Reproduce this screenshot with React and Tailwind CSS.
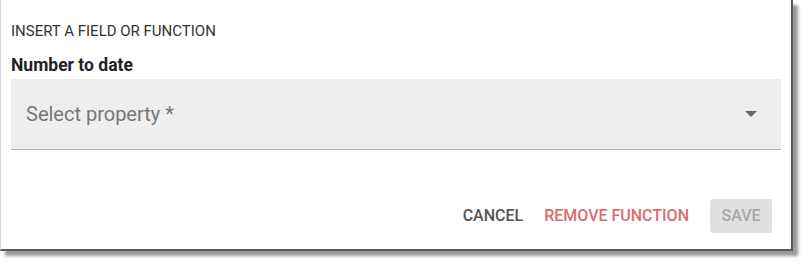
export default function App() {
  return (
    <div className="w-[808px] h-[267px] bg-white font-['Roboto',sans-serif]">
      <div className="w-[793px] h-[251px] bg-white border-l border-l-[#d8d8d8] border-r-2 border-b-2 border-r-[#5a5a5a] border-b-[#5a5a5a] shadow-[5px_5px_3px_rgba(0,0,0,0.4)] flex flex-col">
        <div className="pl-[10px] pr-[10px] pt-[21px]">
          <p className="text-[15px] leading-[20px] text-[#333] uppercase">
            Insert a field or function
          </p>
          <p className="mt-[14px] text-[17.5px] leading-[20px] font-bold text-[#222]">
            Number to date
          </p>
          <div className="mt-[4px] h-[71px] bg-[#eeeeee] border-b border-[#b5b5b5] flex items-center justify-between pl-[15px] pr-[24px]">
            <span className="text-[20px] text-[#777]">Select property *</span>
            <svg width="12" height="6" viewBox="0 0 12 6">
              <path d="M0 0 L12 0 L6 6 Z" fill="#666" />
            </svg>
          </div>
        </div>
        <div className="mt-auto mb-[16px] flex items-center justify-end gap-[21px] pr-[19px]">
          <button className="text-[16px] font-medium text-[#555] uppercase">
            Cancel
          </button>
          <button className="text-[16px] font-medium text-[#dd6b72] uppercase">
            Remove function
          </button>
          <button className="w-[62px] h-[34px] rounded-[3px] bg-[#e0e0e0] text-[16px] font-medium text-[#a8a8a8] uppercase">
            Save
          </button>
        </div>
      </div>
    </div>
  );
}
